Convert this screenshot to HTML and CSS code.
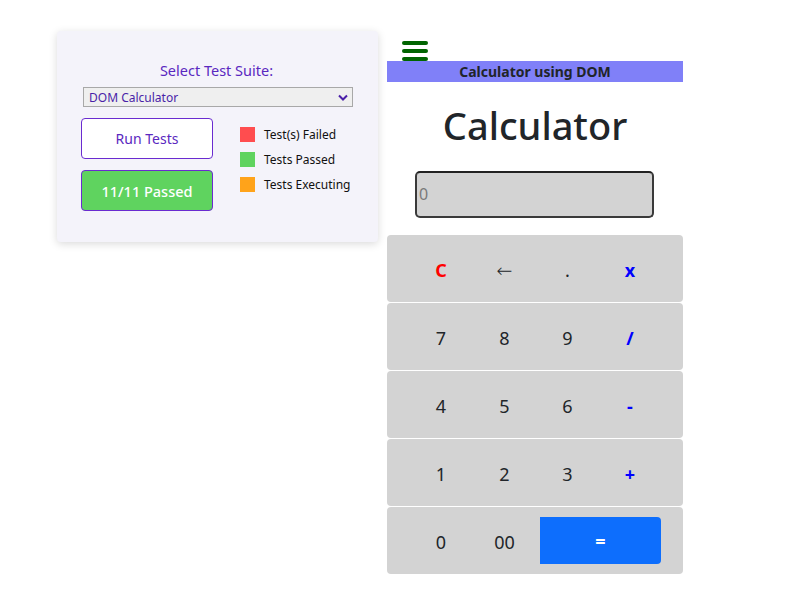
FILE: index.html
```html
<!DOCTYPE html>
<html>
<head>
<meta charset="utf-8">
<link rel="stylesheet" href="styles.css">
</head>
<body>
<div class="page">
  <div class="panel">
    <div class="suite-label">Select Test Suite:</div>
    <div class="select">
      <span>DOM Calculator</span>
      <svg class="chev" width="10" height="7" viewBox="0 0 10 7"><path d="M1 1.5 L5 5.5 L9 1.5" fill="none" stroke="#4a1fa8" stroke-width="2"/></svg>
    </div>
    <div class="controls">
      <div class="btns">
        <div class="btn run">Run Tests</div>
        <div class="btn passed">11/11 Passed</div>
      </div>
      <div class="legend">
        <div class="leg"><span class="sq red"></span>Test(s) Failed</div>
        <div class="leg"><span class="sq green"></span>Tests Passed</div>
        <div class="leg"><span class="sq orange"></span>Tests Executing</div>
      </div>
    </div>
  </div>
  <div class="calc">
    <div class="burger"><span></span><span></span><span></span></div>
    <div class="banner">Calculator using DOM</div>
    <h1 class="title">Calculator</h1>
    <div class="display">0</div>
    <div class="keys">
      <div class="row"><span class="k clr">C</span><span class="k arrow">←</span><span class="k">.</span><span class="k op">x</span></div>
      <div class="row"><span class="k">7</span><span class="k">8</span><span class="k">9</span><span class="k op">/</span></div>
      <div class="row"><span class="k">4</span><span class="k">5</span><span class="k">6</span><span class="k op">-</span></div>
      <div class="row"><span class="k">1</span><span class="k">2</span><span class="k">3</span><span class="k op">+</span></div>
      <div class="row"><span class="k">0</span><span class="k">00</span><span class="eq">=</span></div>
    </div>
  </div>
</div>
</body>
</html>
```
FILE: styles.css
```css
html, body { margin: 0; padding: 0; background: #fff; }
body { font-family: "Noto Sans", "Open Sans", sans-serif; }
.page { display: flex; align-items: flex-start; padding-top: 31px; padding-left: 57px; }
.panel {
  width: 321px; height: 211px; box-sizing: border-box;
  background: #f4f3fa; border-radius: 4px;
  box-shadow: 0 2px 8px rgba(0,0,0,0.15);
  padding: 30px 26px 0 24px;
}
.suite-label { text-align: center; color: #5a28c0; font-size: 14.5px; line-height: 18px; }
.select {
  margin: 8px 0 0 2px; width: 270px; height: 20px; box-sizing: border-box;
  border: 1px solid #a8a8a8; background: #efefef;
  display: flex; align-items: center; justify-content: space-between;
  padding: 0 4px 0 5px; font-size: 12px; color: #4a1fa8;
}
.controls { display: flex; margin-top: 11px; }
.btns { display: flex; flex-direction: column; gap: 11px; width: 132px; }
.btn {
  height: 41px; box-sizing: border-box; border: 1px solid #6a2bd0; border-radius: 4px;
  display: flex; align-items: center; justify-content: center; font-size: 14px;
}
.run { background: #fff; color: #5a28c0; }
.passed { background: #5fd35f; color: #fff; font-size: 14.5px; font-weight: 500; }
.legend { margin-left: 27px; padding-top: 9px; display: flex; flex-direction: column; gap: 10px; }
.leg { display: flex; align-items: center; font-size: 12px; color: #111; height: 15px; }
.sq { width: 15px; height: 15px; margin-right: 9px; }
.red { background: #ff4d4f; }
.green { background: #5fd35f; }
.orange { background: #ffa31a; }

.calc { margin-left: 9px; width: 296px; display: flex; flex-direction: column; }
.burger { margin-left: 15px; margin-top: 10px; width: 26px; height: 20px; display: flex; flex-direction: column; justify-content: space-between; }
.burger span { display: block; height: 4px; border-radius: 2px; background: #006400; }
.banner {
  background: #8080f8; height: 21px; line-height: 22px; text-align: center;
  font-weight: 700; font-size: 14px; color: #212529;
}
.title { margin: 17px 0 0; text-align: center; font-weight: 500; font-size: 38px; line-height: 53px; color: #212529; }
.display {
  margin: 19px 0 0 28px; width: 239px; height: 47px; box-sizing: border-box;
  background: #d3d3d3; border: 2px solid #3a3a3a; border-top-color: #222; border-radius: 5px;
  color: #7a7a7a; font-size: 16px; line-height: 43px; padding-left: 2px;
}
.keys { margin-top: 17px; display: flex; flex-direction: column; gap: 1px; }
.row {
  height: 67px; background: #d3d3d3; border-radius: 4px;
  display: grid; grid-template-columns: 22px 64px 63px 63px 62px 22px; align-items: center;
  padding-top: 2px; box-sizing: border-box;
}
.row::before { content: ""; }
.k { text-align: center; font-size: 18px; color: #212529; }
.k.arrow { font-family: "DejaVu Sans", sans-serif; font-size: 19px; font-weight: 300; }
.k.op { color: #0000ff; font-weight: 700; }
.k.clr { color: #ff0000; font-weight: 700; }
.eq {
  grid-column: 4 / span 2; margin: -2px 0 0 4px; height: 47px; background: #0d6efd; color: #fff;
  border-radius: 0 4px 4px 0; display: flex; align-items: center; justify-content: center; font-size: 18px; font-weight: 700;
}
```
